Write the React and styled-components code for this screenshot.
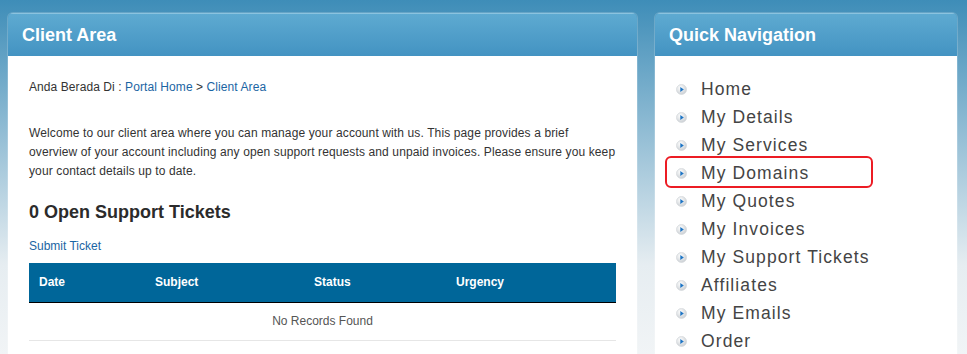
import styled, { createGlobalStyle } from 'styled-components';

const GlobalStyle = createGlobalStyle`
    html, body {
        margin: 0;
        padding: 0;
    }
    body {
        min-height: 354px;
        font-family: "Liberation Sans", Arial, sans-serif;
        background: linear-gradient(to bottom, #3e8db8 0px, #e6edf1 265px, #f1f4f6 354px);
        background-repeat: no-repeat;
        background-color: #f1f4f6;
        overflow: hidden;
    }
`;

const Page = styled.div`
    display: flex;
    align-items: flex-start;
    gap: 18px;
    padding: 13px 10px 0 8px;
    height: 341px;
    overflow: hidden;
`;

const Panel = styled.section`
    width: ${props => props.width}px;
    flex-shrink: 0;
    border-radius: 5px 5px 0 0;
    overflow: hidden;
    box-shadow: 0 0 0 1px rgba(255, 255, 255, 0.18);
`;

const PanelHeader = styled.header`
    height: 43px;
    display: flex;
    align-items: center;
    padding: 0 14px;
    background: linear-gradient(to bottom, #5eaad1, #4393c2);
    border-top: 1px solid rgba(170, 215, 235, 0.7);
    box-sizing: border-box;
`;

const PanelTitle = styled.h2`
    margin: 0;
    color: #fff;
    font-size: 18px;
    font-weight: bold;
`;

const PanelBody = styled.div`
    background: #fff;
    min-height: 320px;
    padding: ${props => props.padding};
    color: #333;
    font-size: 12px;
`;

const Breadcrumb = styled.div`
    line-height: 19px;
    letter-spacing: 0.08px;
`;

const Link = styled.a`
    color: #1b65a3;
    text-decoration: none;
`;

const Intro = styled.p`
    margin: 27px 0 0;
    line-height: 19px;
    letter-spacing: 0.12px;
    white-space: nowrap;
`;

const Heading = styled.h3`
    margin: 20px 0 0;
    font-size: 18px;
    line-height: 22px;
    font-weight: bold;
    color: #2b2b2b;
`;

const SubmitRow = styled.div`
    margin-top: 14px;
    line-height: 19px;
    font-size: 12px;
`;

const Table = styled.table`
    width: 100%;
    margin-top: 7px;
    border-collapse: collapse;
    table-layout: fixed;
`;

const Th = styled.th`
    box-sizing: border-box;
    width: ${props => props.width}px;
    height: 39px;
    padding: 0 10px;
    text-align: left;
    background: #006699;
    color: #fff;
    font-weight: bold;
    font-size: 12px;
    border-bottom: 1px solid #000;
`;

const EmptyCell = styled.td`
    box-sizing: border-box;
    height: 38px;
    padding: 0;
    text-align: center;
    color: #555;
    border-bottom: 1px solid #e6e6e6;
`;

const NavList = styled.ul`
    list-style: none;
    margin: 0;
    padding: 0;
`;

const NavItem = styled.li`
    position: relative;
    display: flex;
    align-items: center;
    gap: 14px;
    height: 28px;
    font-size: 17.5px;
    letter-spacing: 1.1px;
    color: #444;

    ${props => props.highlighted && `
        &::after {
            content: '';
            position: absolute;
            top: -3px;
            bottom: -1px;
            left: -11px;
            width: 204px;
            border: 2px solid #ec1c24;
            border-radius: 6px;
        }
    `}
`;

const Bullet = () => (
    <svg width="11" height="11" viewBox="0 0 10 10">
        <defs>
            <radialGradient id="bulletFill" cx="40%" cy="35%" r="65%">
                <stop offset="0%" stopColor="#ffffff" />
                <stop offset="100%" stopColor="#cbd0d4" />
            </radialGradient>
        </defs>
        <circle cx="5" cy="5" r="4.6" fill="url(#bulletFill)" stroke="#d3d7da" strokeWidth="0.6" />
        <polygon points="3.9,2.7 7.1,5 3.9,7.3" fill="#1d74c4" />
    </svg>
);

const navItems = [
    'Home',
    'My Details',
    'My Services',
    'My Domains',
    'My Quotes',
    'My Invoices',
    'My Support Tickets',
    'Affiliates',
    'My Emails',
    'Order',
];

const App = () => (
    <>
        <GlobalStyle />
        <Page>
            <Panel width={629}>
                <PanelHeader>
                    <PanelTitle>Client Area</PanelTitle>
                </PanelHeader>
                <PanelBody padding="22px 21px 30px 21px">
                    <Breadcrumb>
                        Anda Berada Di : <Link href="#">Portal Home</Link> &gt; <Link href="#">Client Area</Link>
                    </Breadcrumb>
                    <Intro>
                        Welcome to our client area where you can manage your account with us. This page provides a brief<br />
                        overview of your account including any open support requests and unpaid invoices. Please ensure you keep<br />
                        your contact details up to date.
                    </Intro>
                    <Heading>0 Open Support Tickets</Heading>
                    <SubmitRow>
                        <Link href="#">Submit Ticket</Link>
                    </SubmitRow>
                    <Table>
                        <thead>
                            <tr>
                                <Th width={116}>Date</Th>
                                <Th width={159}>Subject</Th>
                                <Th width={142}>Status</Th>
                                <Th width={170}>Urgency</Th>
                            </tr>
                        </thead>
                        <tbody>
                            <tr>
                                <EmptyCell colSpan={4}>No Records Found</EmptyCell>
                            </tr>
                        </tbody>
                    </Table>
                </PanelBody>
            </Panel>
            <Panel width={302}>
                <PanelHeader>
                    <PanelTitle>Quick Navigation</PanelTitle>
                </PanelHeader>
                <PanelBody padding="19px 21px 20px 21px">
                    <NavList>
                        {navItems.map(item => (
                            <NavItem key={item} highlighted={item === 'My Domains'}>
                                <Bullet />
                                {item}
                            </NavItem>
                        ))}
                    </NavList>
                </PanelBody>
            </Panel>
        </Page>
    </>
);

export default App;
